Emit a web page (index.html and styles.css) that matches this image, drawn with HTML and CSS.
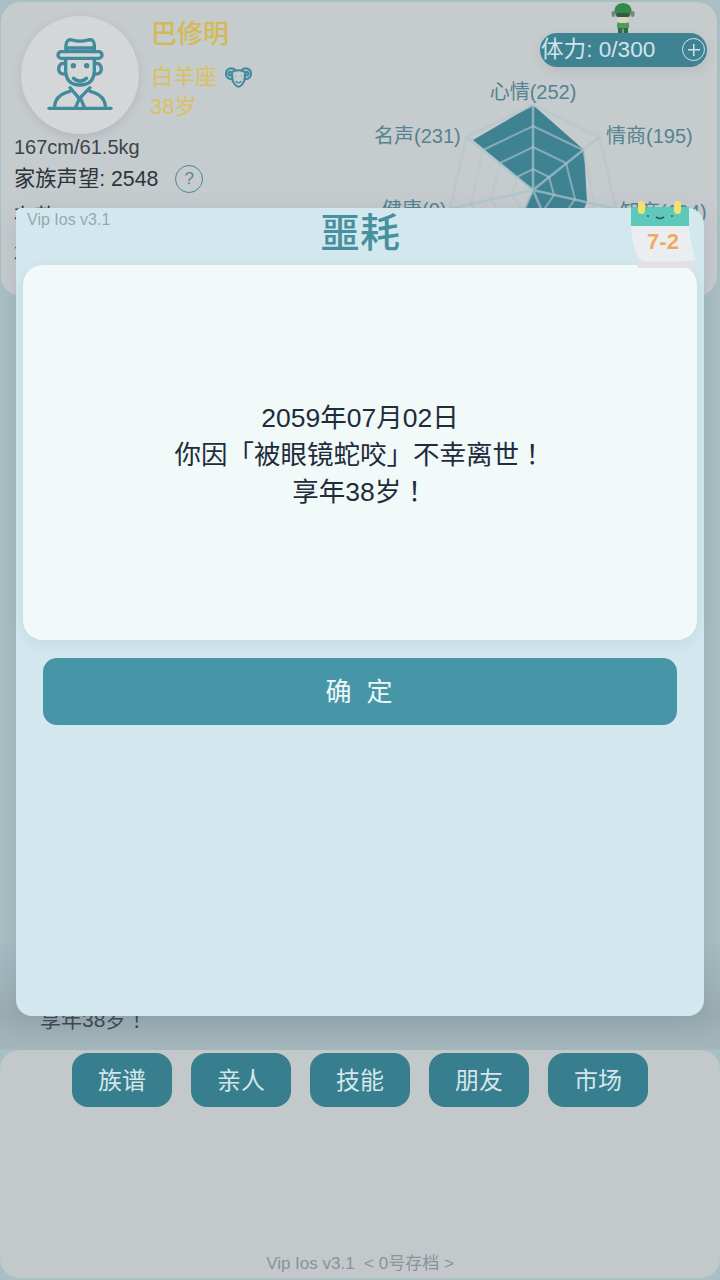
FILE: index.html
```html
<!DOCTYPE html>
<html>
<head>
    <meta charset="utf-8">
    <title>噩耗</title>
    <link rel="stylesheet" href="styles.css">
</head>
<body>
<div class="screen">

    <div class="top-card">
        <div class="profile">
            <div class="head-row">
                <div class="avatar">
                    <svg class="avatar-icon" viewBox="-15 0 330 330" fill="none" stroke="#408c9c" stroke-width="10" stroke-linecap="round" stroke-linejoin="round">
                        <path d="M108 95V74Q110 56 127 60Q150 67 174 60Q192 56 193 74V95"/>
                        <path d="M108 84H193"/>
                        <rect x="84" y="95" width="132" height="20" rx="10"/>
                        <path d="M107 116V150Q107 195 150 195Q193 195 193 150V116"/>
                        <path d="M106 130Q86 128 86 148Q88 164 107 162"/>
                        <path d="M194 130Q214 128 214 148Q212 164 193 162"/>
                        <circle cx="130" cy="137" r="3" fill="#408c9c"/>
                        <circle cx="170" cy="137" r="3" fill="#408c9c"/>
                        <path d="M131 175Q150 192 169 175" stroke-width="11"/>
                        <path d="M57 265H243"/>
                        <path d="M74 265Q72 226 120 214"/>
                        <path d="M226 265Q228 226 180 214"/>
                        <path d="M120 203L148 236L180 203"/>
                        <path d="M148 236L136 264M152 236L164 264"/>
                    </svg>
                </div>
                <div class="identity">
                    <div class="name">巴修明</div>
                    <div class="sign">白羊座
                        <svg class="aries" viewBox="0 0 28 22" fill="none" stroke="#408c9c" stroke-width="2.2">
                            <circle cx="6.5" cy="7.5" r="5.5"/>
                            <circle cx="21.5" cy="7.5" r="5.5"/>
                            <circle cx="5.5" cy="7.5" r="1.8"/>
                            <circle cx="22.5" cy="7.5" r="1.8"/>
                            <path d="M7 6Q14 2 21 6L20 15Q17 21 14 21Q11 21 8 15Z" fill="#c6cbce"/>
                            <path d="M11 15.5Q14 18.5 17 15.5" stroke-width="1.4"/>
                            <path d="M11 10H11.5M16.5 10H17" stroke-width="1.6"/>
                        </svg>
                    </div>
                    <div class="age">38岁</div>
                </div>
            </div>
            <div class="size">167cm/61.5kg</div>
            <div class="stat-line first">家族声望: 2548 <span class="help">?</span></div>
            <div class="stat-line">存款: 448,079,404</div>
            <div class="stat-line">状态: 死亡</div>
        </div>

        <div class="side">
            <div class="energy">
                <svg class="sprite" viewBox="0 0 24 30">
                    <rect x="6" y="19" width="12" height="7" rx="2" fill="#4f9a58"/>
                    <rect x="7" y="25" width="4.5" height="5" fill="#2f6b3c"/>
                    <rect x="12.5" y="25" width="4.5" height="5" fill="#2f6b3c"/>
                    <rect x="6.5" y="13" width="11" height="7" rx="3" fill="#d9d3c4"/>
                    <path d="M3 11Q3 0 12 0Q21 0 21 11Z" fill="#348a4a"/>
                    <rect x="5" y="10" width="14" height="4" rx="2" fill="#2f5d42"/>
                    <rect x="0.5" y="8" width="4" height="6" rx="2" fill="#77867c"/>
                    <rect x="19.5" y="8" width="4" height="6" rx="2" fill="#77867c"/>
                </svg>
                <span class="energy-text">体力: 0/300</span>
                <span class="plus"></span>
            </div>
            <svg class="radar" viewBox="360 67 360 227">
                <polygon points="533,105 584,150 587,202 570,240 525,208 533,190 473,140" fill="#3f8393"/>
                <g fill="none" stroke="#b4c6cc" stroke-opacity="0.6" stroke-width="2">
                    <polygon points="533,105 599.5,137 616,209 570,276 496,276 450,209 466.5,137" stroke-width="3"/>
                    <polygon points="533,126 583,150 595,204 561,256 505,256 471,204 483,150"/>
                    <polygon points="533,147 566,163 575,199 552,233 514,233 491,199 500,163"/>
                    <polygon points="533,169 549,177 554,195 543,211 523,211 512,195 517,177"/>
                </g>
                <g stroke="#a9c4cc" stroke-opacity="0.7" stroke-width="2.5">
                    <path d="M533 190V105M533 190L599.5 137M533 190L616 209M533 190L570 276M533 190L496 276"/>
                    <path d="M533 190L466.5 137M533 190L450 209"/>
                </g>
                <g class="radar-label">
                    <text x="533" y="99" text-anchor="middle">心情(252)</text>
                    <text x="374" y="143">名声(231)</text>
                    <text x="606" y="143">情商(195)</text>
                    <text x="620" y="219">知商(194)</text>
                    <text x="382" y="217">健康(0)</text>
                </g>
            </svg>
        </div>
    </div>

    <div class="log">
        <p class="log-line">享年38岁<span class="bang">！</span></p>
    </div>

    <div class="bottom-card">
        <div class="nav-row">
            <button class="nav-btn">族谱</button>
            <button class="nav-btn">亲人</button>
            <button class="nav-btn">技能</button>
            <button class="nav-btn">朋友</button>
            <button class="nav-btn">市场</button>
        </div>
        <div class="footer">Vip Ios v3.1&nbsp;&nbsp;&lt; 0号存档 &gt;</div>
    </div>

    <div class="modal">
        <div class="modal-head">
            <span class="version">Vip Ios v3.1</span>
            <h1 class="modal-title">噩耗</h1>
        </div>
        <svg class="calendar" viewBox="0 0 66 70">
            <path d="M6 60H66L64 67H8Z" fill="#e2e0e3"/>
            <path d="M1 24H59Q60 44 66 59Q40 62 12 60Q2 52 1 24Z" fill="#ebeef1"/>
            <path d="M1 6H59V25H1Z" fill="#5ec9bb"/>
            <rect x="8" y="0" width="7" height="13" rx="3.5" fill="#f0e36c"/>
            <rect x="44" y="0" width="7" height="13" rx="3.5" fill="#f0e36c"/>
            <path d="M26 16Q30 19 34 16" fill="none" stroke="#2f5f5c" stroke-width="1.6"/>
            <circle cx="18" cy="15" r="1" fill="#2f5f5c"/>
            <circle cx="42" cy="15" r="1" fill="#2f5f5c"/>
            <text x="33" y="48" text-anchor="middle" class="calendar-date">7-2</text>
        </svg>
        <div class="modal-panel">
            <p>2059年07月02日</p>
            <p>你因「被眼镜蛇咬」不幸离世<span class="bang">！</span></p>
            <p>享年38岁<span class="bang">！</span></p>
        </div>
        <button class="confirm">确 定</button>
    </div>

</div>
</body>
</html>
```

FILE: styles.css
```css
* {
    box-sizing: border-box;
}

body {
    margin: 0;
    font-family: "Liberation Sans", "Noto Sans CJK SC", sans-serif;
    background-color: #a9bfc4;
}

.screen {
    position: relative;
    width: 720px;
    height: 1280px;
    overflow: hidden;
    display: flex;
    flex-direction: column;
}

/* the TC cut centres the fullwidth mark in its cell */
.bang {
    font-family: "Noto Sans CJK TC", sans-serif;
    line-height: 1;
}

/* top card */
.top-card {
    height: 294px;
    margin: 2px 3px 0 1px;
    display: flex;
    flex: none;
    background-color: #c6cbce;
    border-radius: 20px;
    overflow: hidden;
}

.profile {
    width: 359px;
    padding: 14px 0 0 13px;
    color: #3c444c;
}

.head-row {
    display: flex;
    height: 119px;
}

.avatar {
    width: 118px;
    height: 118px;
    margin-left: 7px;
    display: flex;
    align-items: center;
    justify-content: center;
    border-radius: 50%;
    background-color: #d4d6d8;
    box-shadow: 0 3px 10px rgba(90, 100, 110, 0.18);
}

.avatar-icon {
    width: 110px;
    height: 110px;
}

.identity {
    margin-left: 12px;
    color: #d3ba54;
}

.name {
    margin-top: 2px;
    font-size: 26px;
    line-height: 32px;
    font-weight: 500;
}

.sign {
    display: flex;
    align-items: center;
    gap: 8px;
    margin-top: 12px;
    font-size: 22px;
    line-height: 30px;
    color: #d7c25f;
}

.aries {
    width: 27px;
    height: 22px;
}

.age {
    margin-top: 1px;
    margin-left: -1px;
    font-size: 22px;
    line-height: 28px;
    color: #d7c25f;
}

.size {
    margin-top: -1px;
    font-size: 20px;
    line-height: 26px;
}

.stat-line {
    display: flex;
    align-items: center;
    height: 38px;
    font-size: 21.3px;
    white-space: pre;
    color: #2d343c;
}

.stat-line.first {
    margin-top: -3px;
}

.help {
    width: 28px;
    height: 28px;
    margin: 6px 0 0 11px;
    border: 1.5px solid #408c9c;
    border-radius: 50%;
    font-size: 17px;
    line-height: 25px;
    text-align: center;
    color: #5f8791;
}

.side {
    width: 357px;
    padding-top: 31px;
}

.energy {
    position: relative;
    width: 167px;
    height: 34px;
    margin-left: 180px;
    padding: 0 0 5px 1px;
    display: flex;
    align-items: center;
    border-radius: 17px;
    background-color: #3f8393;
    box-shadow: 0 4px 12px rgba(90, 100, 110, 0.12);
    font-size: 22.6px;
    color: #cfe5ea;
}

.sprite {
    position: absolute;
    left: 71px;
    top: -30px;
    width: 24px;
    height: 30px;
}

.plus {
    position: absolute;
    right: 2px;
    top: 5px;
    width: 23px;
    height: 23px;
    border: 1.5px solid #cfe5ea;
    border-radius: 50%;
    background:
        linear-gradient(#cfe5ea, #cfe5ea) center / 12px 1.5px no-repeat,
        linear-gradient(#cfe5ea, #cfe5ea) center / 1.5px 12px no-repeat;
}

.radar {
    display: block;
    width: 360px;
    height: 227px;
}

.radar-label text {
    font-size: 20px;
    fill: #55838f;
}

/* middle log */
.log {
    flex: 1;
    margin-top: 4px;
    display: flex;
    flex-direction: column;
    justify-content: flex-end;
    padding: 0 0 17px 40px;
    background: linear-gradient(#a9bfc4 0, #a9bfc4 85%, #9aadb3 95%, #a3b6bb 100%);
}

.log-line {
    margin: 0;
    height: 26px;
    font-size: 21px;
    line-height: 26px;
    color: #3f484f;
}

/* bottom card */
.bottom-card {
    height: 228px;
    margin-bottom: 2px;
    flex: none;
    display: flex;
    flex-direction: column;
    align-items: center;
    background-color: #c3c8cb;
    border-radius: 20px;
}

.nav-row {
    display: flex;
    gap: 19px;
    margin-top: 3px;
}

.nav-btn {
    width: 100px;
    height: 54px;
    padding: 0 0 3px;
    border: none;
    border-radius: 16px;
    background-color: #377e8f;
    font-family: inherit;
    font-size: 24px;
    color: #d5e6e9;
}

.footer {
    margin-top: auto;
    margin-bottom: 2px;
    font-size: 17px;
    line-height: 24px;
    color: #87949b;
}

/* popup */
.modal {
    position: absolute;
    left: 16px;
    top: 208px;
    width: 688px;
    height: 808px;
    padding: 0 7px;
    background-color: #d3e8ee;
    border-radius: 5px 16px 16px 16px;
    box-shadow: 0 6px 24px rgba(70, 90, 100, 0.15);
}

.modal-head {
    position: relative;
    height: 57px;
    text-align: center;
}

.version {
    position: absolute;
    left: 4px;
    top: 3px;
    font-size: 16px;
    line-height: 18px;
    color: #95a9b0;
}

.modal-title {
    margin: 0;
    font-size: 40px;
    line-height: 50px;
    font-weight: 500;
    color: #47909f;
}

.calendar {
    position: absolute;
    right: 8px;
    top: -7px;
    width: 66px;
    height: 70px;
}

.calendar-date {
    font-family: "Liberation Sans", sans-serif;
    font-size: 22px;
    font-weight: bold;
    fill: #efa95e;
}

.modal-panel {
    height: 375px;
    padding-top: 6px;
    display: flex;
    flex-direction: column;
    align-items: center;
    justify-content: center;
    background-color: #f1f9f9;
    border-radius: 20px;
    box-shadow: 0 4px 14px rgba(70, 100, 110, 0.1);
}

.modal-panel p {
    margin: 0;
    height: 37px;
    font-size: 26.5px;
    line-height: 37px;
    color: #1f2c3a;
}

.confirm {
    display: block;
    width: 634px;
    height: 67px;
    margin: 18px 0 0 20px;
    padding: 0 0 4px;
    border: none;
    border-radius: 14px;
    background-color: #4696a7;
    font-family: inherit;
    font-size: 26px;
    letter-spacing: 2px;
    word-spacing: 4px;
    color: #eef6f7;
}
```
